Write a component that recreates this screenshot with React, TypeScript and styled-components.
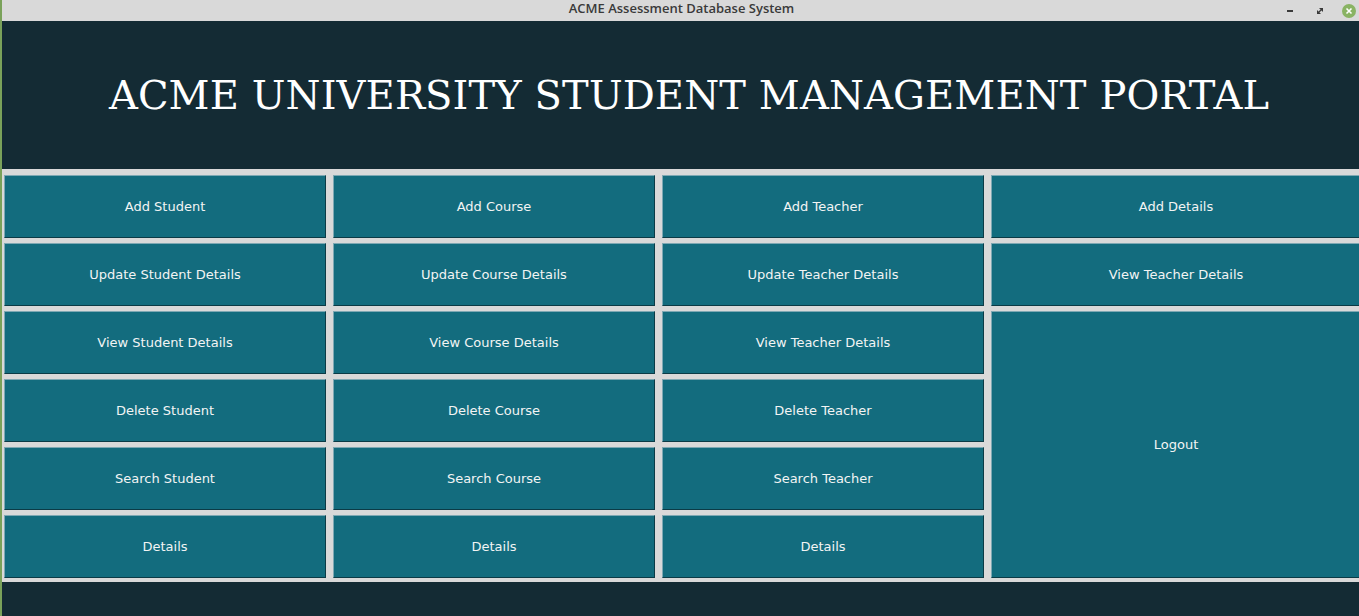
import React from 'react'
import styled, { createGlobalStyle } from 'styled-components'

const GlobalStyle = createGlobalStyle`
  html, body {
    margin: 0;
    padding: 0;
    background: #142b34;
  }
`

const Window = styled.div`
  width: 1359px;
  height: 616px;
  display: flex;
  flex-direction: column;
  overflow: hidden;
  border-left: 2px solid #7aa25a;
  box-sizing: border-box;
  background: #142b34;
`

const TitleBar = styled.div`
  height: 21px;
  flex-shrink: 0;
  background: #d9d9d9;
  display: grid;
  grid-template-columns: 1fr auto 1fr;
  align-items: center;
  font-family: 'Open Sans', sans-serif;
  font-weight: 600;
  font-size: 13px;
  color: #3a3a3a;
`

const TitleText = styled.div`
  grid-column: 2;
  padding-left: 2px;
  margin-top: -5px;
`

const Controls = styled.div`
  grid-column: 3;
  justify-self: end;
  display: flex;
  align-items: center;
  gap: 14px;
  padding-right: 3px;
`

const ControlButton = styled.div`
  width: 16px;
  height: 16px;
  display: flex;
  align-items: center;
  justify-content: center;
`

const CloseButton = styled.div`
  width: 14px;
  height: 14px;
  border-radius: 50%;
  background: #89b363;
  display: flex;
  align-items: center;
  justify-content: center;
`

const Header = styled.header`
  height: 148px;
  flex-shrink: 0;
  display: flex;
  align-items: center;
  justify-content: center;
  padding-left: 17px;
`

const HeaderTitle = styled.h1`
  margin: 0;
  font-family: 'DejaVu Serif', serif;
  font-weight: normal;
  font-size: 40px;
  color: #ffffff;
  letter-spacing: 0.1px;
`

const Panel = styled.div`
  background: #d9d9d9;
  padding: 6px 0 4px 2px;
  display: grid;
  grid-template-columns: 322px 322px 322px 370px;
  grid-auto-rows: 63px;
  column-gap: 7px;
  row-gap: 5px;
`

const ActionButton = styled.button<{ $tall?: boolean }>`
  grid-column: ${(p) => (p.$tall ? '4' : 'auto')};
  grid-row: ${(p) => (p.$tall ? '3 / span 4' : 'auto')};
  margin: 0;
  padding: 0;
  background: #136c7e;
  border-top: 1px solid #7ea8b3;
  border-left: 1px solid #7ea8b3;
  border-right: 1px solid #0b3b46;
  border-bottom: 1px solid #0b3b46;
  color: #f2f4f4;
  font-family: 'DejaVu Sans', sans-serif;
  font-size: 13px;
  cursor: pointer;
`

const Footer = styled.div`
  flex: 1;
`

const rows: string[][] = [
  ['Add Student', 'Add Course', 'Add Teacher', 'Add Details'],
  ['Update Student Details', 'Update Course Details', 'Update Teacher Details', 'View Teacher Details'],
  ['View Student Details', 'View Course Details', 'View Teacher Details'],
  ['Delete Student', 'Delete Course', 'Delete Teacher'],
  ['Search Student', 'Search Course', 'Search Teacher'],
  ['Details', 'Details', 'Details'],
]

const App = () => {
  return (
    <>
      <GlobalStyle />
      <Window>
        <TitleBar>
          <TitleText>ACME Assessment Database System</TitleText>
          <Controls>
            <ControlButton>
              <svg width="10" height="4" viewBox="0 0 10 4">
                <rect x="2" y="1" width="6" height="2" fill="#3a3a3a" />
              </svg>
            </ControlButton>
            <ControlButton>
              <svg width="10" height="10" viewBox="0 0 10 10">
                <path d="M4 2H8V6Z M2 4V8H6Z" fill="#3a3a3a" />
                <path d="M3 7L7 3" stroke="#3a3a3a" strokeWidth="1.2" />
              </svg>
            </ControlButton>
            <CloseButton>
              <svg width="8" height="8" viewBox="0 0 8 8">
                <path d="M1.5 1.5L6.5 6.5M6.5 1.5L1.5 6.5" stroke="#ffffff" strokeWidth="1.6" />
              </svg>
            </CloseButton>
          </Controls>
        </TitleBar>
        <Header>
          <HeaderTitle>ACME UNIVERSITY STUDENT MANAGEMENT PORTAL</HeaderTitle>
        </Header>
        <Panel>
          {rows.map((row, i) =>
            row.map((label, j) => <ActionButton key={`${i}-${j}`}>{label}</ActionButton>)
          )}
          <ActionButton $tall>Logout</ActionButton>
        </Panel>
        <Footer />
      </Window>
    </>
  )
}

export default App
